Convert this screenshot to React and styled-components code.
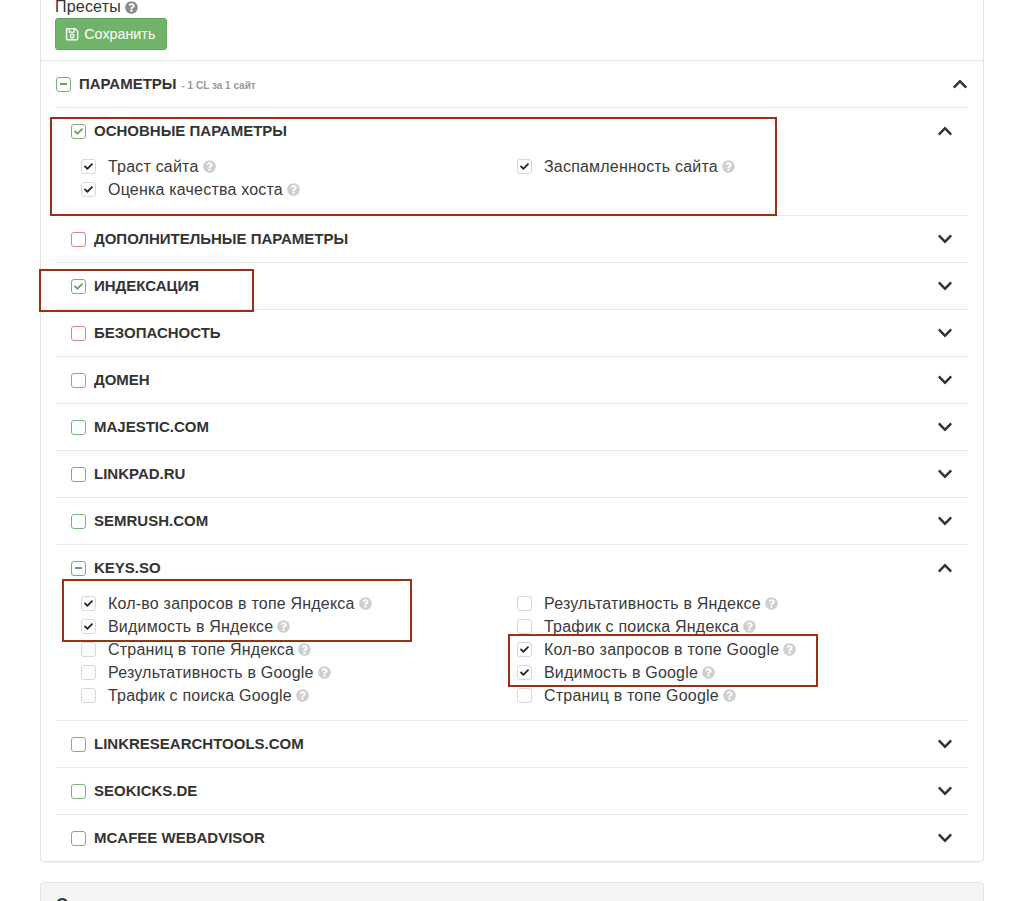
import React from 'react';
import styled, { createGlobalStyle } from 'styled-components';
import { FaCheck, FaChevronDown, FaChevronUp, FaQuestionCircle, FaRegSave } from 'react-icons/fa';

const GlobalStyle = createGlobalStyle`
  html, body {
    margin: 0;
    padding: 0;
    height: 901px;
    overflow: hidden;
    background: #fff;
    font-family: "Liberation Sans", Arial, sans-serif;
    color: #333;
  }
`;

const Page = styled.div`
  position: relative;
  width: 1016px;
  height: 901px;
  padding: 0 32px 0 40px;
  box-sizing: border-box;
  overflow: hidden;
`;

const Card = styled.div`
  border: 1px solid #e2e2e2;
  border-top: 0;
  border-radius: 0 0 4px 4px;
  box-shadow: 0 1px 1px rgba(0, 0, 0, .05);
`;

const Presets = styled.div`
  height: 61px;
  padding: 0 15px 0 14px;
  box-sizing: border-box;
  border-bottom: 1px solid #e4e4e4;
`;

const PresetLabel = styled.div`
  display: flex;
  align-items: center;
  height: 14px;
  margin-bottom: 4px;
  font-size: 16px;
  letter-spacing: .2px;
  line-height: 14px;
`;

const SaveButton = styled.button`
  display: flex;
  align-items: center;
  gap: 5px;
  width: 112px;
  height: 32px;
  padding: 0 0 0 9px;
  border: 1px solid #62a562;
  border-radius: 3px;
  background: #70b469;
  color: #fff;
  font: 14.3px "Liberation Sans", Arial, sans-serif;
`;

const Params = styled.div`
  padding: 0 15px 0 14px;
`;

const Row = styled.div`
  display: flex;
  align-items: center;
  gap: 8px;
  height: 46px;
  padding: 0 ${p => (p.$top ? 0 : 15)}px 0 ${p => (p.$top ? 1 : 16)}px;
`;

const Title = styled.div`
  flex: 1;
  padding-bottom: 2px;
  font-size: 15px;
  font-weight: 700;
  color: #333;
  white-space: nowrap;
`;

const Note = styled.span`
  margin-left: 5px;
  font-size: 10px;
  color: #999;
`;

const Group = styled.div`
  border-top: 1px solid #e8e8e8;
`;

const Chevron = styled.span`
  display: flex;
  color: #333;
  font-size: 16px;
`;

const GroupBox = styled.span`
  display: flex;
  align-items: center;
  justify-content: center;
  width: 13px;
  height: 13px;
  border: 1px solid ${p => (p.$tone === 'red' ? '#c98a8a' : '#78b078')};
  border-radius: 3px;
  color: #5fa55f;
  font-size: 9px;
  flex-shrink: 0;
`;

const Minus = styled.i`
  display: block;
  width: 7px;
  height: 2px;
  background: #5fa55f;
`;

const Options = styled.div`
  display: grid;
  grid-template-columns: 436px 1fr;
  padding: 0 15px ${p => p.$pad}px 26px;
  margin-top: ${p => p.$gap}px;
`;

const Option = styled.div`
  display: flex;
  align-items: center;
  height: 23px;
  font-size: 16px;
  letter-spacing: .2px;
  color: #3a3a3a;
  white-space: nowrap;
`;

const OptionBox = styled.span`
  display: flex;
  align-items: center;
  justify-content: center;
  width: 13px;
  height: 13px;
  margin-right: 12px;
  border: 1px solid #d8d8d8;
  border-radius: 3px;
  color: #222;
  font-size: 9px;
  flex-shrink: 0;
`;

const Hint = styled.span`
  display: inline-flex;
  margin-left: 4px;
  font-size: 13px;
  color: ${p => (p.$dark ? '#8a8a8a' : '#cfcfcf')};
`;

const NextCard = styled.div`
  margin-top: 20px;
  height: 60px;
  padding: 13px 15px;
  box-sizing: border-box;
  border: 1px solid #e2e2e2;
  border-radius: 4px;
  background: #f5f5f5;
  font-size: 16px;
  font-weight: 700;
`;

const Mark = styled.div`
  position: absolute;
  left: ${p => p.$x}px;
  top: ${p => p.$y}px;
  width: ${p => p.$w}px;
  height: ${p => p.$h}px;
  box-sizing: border-box;
  border: 2px solid #9c2f14;
  pointer-events: none;
`;

const basic = [
  [{ t: 'Траст сайта', on: true }, { t: 'Оценка качества хоста', on: true }],
  [{ t: 'Заспамленность сайта', on: true }],
];

const keys = [
  [
    { t: 'Кол-во запросов в топе Яндекса', on: true },
    { t: 'Видимость в Яндексе', on: true },
    { t: 'Страниц в топе Яндекса' },
    { t: 'Результативность в Google' },
    { t: 'Трафик с поиска Google' },
  ],
  [
    { t: 'Результативность в Яндексе' },
    { t: 'Трафик с поиска Яндекса' },
    { t: 'Кол-во запросов в топе Google', on: true },
    { t: 'Видимость в Google', on: true },
    { t: 'Страниц в топе Google' },
  ],
];

const groups = [
  { name: 'Основные параметры', state: 'check', cols: basic, gap: 1, pad: 14 },
  { name: 'Дополнительные параметры', state: 'red' },
  { name: 'Индексация', state: 'check' },
  { name: 'Безопасность', state: 'red' },
  { name: 'Домен', state: 'red' },
  { name: 'Majestic.com', state: 'empty' },
  { name: 'Linkpad.ru', state: 'empty' },
  { name: 'Semrush.com', state: 'empty' },
  { name: 'Keys.so', state: 'minus', cols: keys, gap: 1, pad: 13 },
  { name: 'LinkResearchTools.com', state: 'red' },
  { name: 'Seokicks.de', state: 'empty' },
  { name: 'McAfee WebAdvisor', state: 'red' },
];

const marks = [
  { x: 50, y: 117, w: 727, h: 99 },
  { x: 39, y: 269, w: 215, h: 43 },
  { x: 62, y: 579, w: 350, h: 63 },
  { x: 508, y: 634, w: 310, h: 53 },
];

function StateBox({ state }) {
  return (
    <GroupBox $tone={state === 'red' ? 'red' : 'green'}>
      {state === 'check' && <FaCheck />}
      {state === 'minus' && <Minus />}
    </GroupBox>
  );
}

function OptionColumn({ items }) {
  return (
    <div>
      {items.map(item => (
        <Option key={item.t}>
          <OptionBox>{item.on && <FaCheck />}</OptionBox>
          {item.t}
          <Hint><FaQuestionCircle /></Hint>
        </Option>
      ))}
    </div>
  );
}

export default function App() {
  return (
    <Page>
      <GlobalStyle />
      <Card>
        <Presets>
          <PresetLabel>
            Пресеты
            <Hint $dark><FaQuestionCircle /></Hint>
          </PresetLabel>
          <SaveButton><FaRegSave />Сохранить</SaveButton>
        </Presets>
        <Params>
          <Row $top>
            <StateBox state="minus" />
            <Title>ПАРАМЕТРЫ<Note>- 1 CL за 1 сайт</Note></Title>
            <Chevron><FaChevronUp /></Chevron>
          </Row>
          {groups.map(group => (
            <Group key={group.name}>
              <Row>
                <StateBox state={group.state} />
                <Title>{group.name.toUpperCase()}</Title>
                <Chevron>{group.cols ? <FaChevronUp /> : <FaChevronDown />}</Chevron>
              </Row>
              {group.cols && (
                <Options $gap={group.gap} $pad={group.pad}>
                  <OptionColumn items={group.cols[0]} />
                  <OptionColumn items={group.cols[1]} />
                </Options>
              )}
            </Group>
          ))}
        </Params>
      </Card>
      <NextCard>О</NextCard>
      {marks.map(m => (
        <Mark key={m.x} $x={m.x} $y={m.y} $w={m.w} $h={m.h} />
      ))}
    </Page>
  );
}
